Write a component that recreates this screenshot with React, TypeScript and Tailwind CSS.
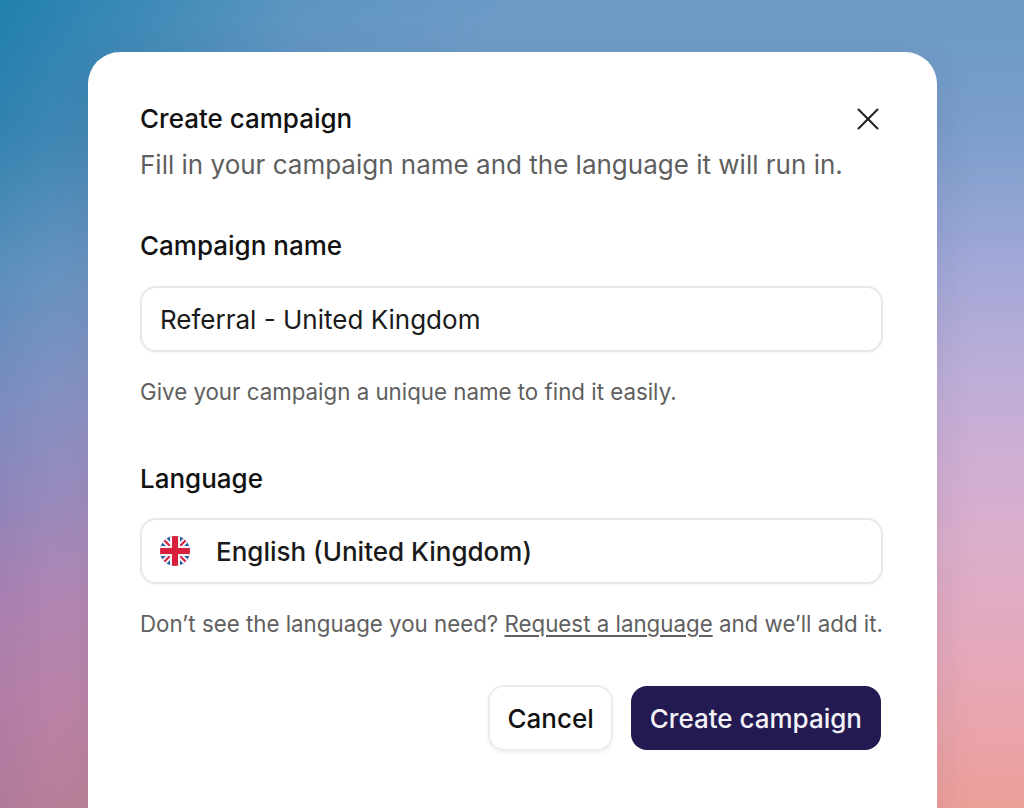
import { X } from 'lucide-react'

function UkFlag() {
  return (
    <svg width="30" height="30" viewBox="0 0 30 30" className="shrink-0">
      <defs>
        <clipPath id="flag-circle">
          <circle cx="15" cy="15" r="15" />
        </clipPath>
      </defs>
      <g clipPath="url(#flag-circle)">
        <rect width="30" height="30" fill="#2b5aa6" />
        <path d="M0 0 L30 30 M30 0 L0 30" stroke="#f5f5f5" strokeWidth="6" />
        <path d="M0 0 L30 30 M30 0 L0 30" stroke="#d8203c" strokeWidth="2" />
        <rect x="10" y="0" width="10" height="30" fill="#f5f5f5" />
        <rect x="0" y="10" width="30" height="10" fill="#f5f5f5" />
        <rect x="12" y="0" width="6" height="30" fill="#d8203c" />
        <rect x="0" y="12" width="30" height="6" fill="#d8203c" />
      </g>
    </svg>
  )
}

export default function App() {
  return (
    <div
      className="relative h-[808px] w-full overflow-hidden pt-[52px] pl-[88px] pr-[87px] font-['Inter',sans-serif] bg-[linear-gradient(180deg,#2080ae_0px,#3383b0_130px,#5b90bc_270px,#7b8cbf_400px,#8f85ba_500px,#a87fb0_600px,#b27da6_700px,#b07a9a_808px)] before:absolute before:inset-0 before:content-[''] before:bg-[linear-gradient(180deg,#6a9ac5_0px,#7c9ecb_130px,#8fa3d2_200px,#a3a8d7_270px,#bcaed8_370px,#cdaed4_450px,#dbaecb_540px,#e5a9bc_650px,#eba3a6_750px,#ed9f99_808px)] before:[mask-image:linear-gradient(90deg,transparent_0px,rgba(0,0,0,0.82)_300px,black_500px)]"
    >
      <div className="relative h-[800px] rounded-t-[32px] bg-white px-[52px] pt-[48px] shadow-[0_10px_40px_rgba(30,40,80,0.1)]">
        {/* Header */}
        <div className="flex items-center justify-between">
          <h2 className="text-[26px] leading-[36px] font-[460] text-[#111]">Create campaign</h2>
          <button className="mr-[-2px] text-[#222]" aria-label="Close">
            <X size={38} strokeWidth={1.3} />
          </button>
        </div>
        <p className="mt-[9px] text-[26px] leading-[36px] text-[#5f5f5f]">Fill in your campaign name and the language it will run in.</p>

        {/* Campaign name */}
        <label className="mt-[45px] block text-[26px] leading-[36px] font-[460] text-[#111]">Campaign name</label>
        <div className="mt-[22px] flex h-[66px] w-[743px] items-center rounded-[16px] border-2 border-[#e8e8e8] bg-white px-[18px] shadow-[0_1px_3px_rgba(0,0,0,0.05)]">
          <span className="text-[26px] text-[#1a1a1a]">Referral - United Kingdom</span>
        </div>
        <p className="mt-[24px] text-[22.3px] leading-[32px] text-[#5f5f5f]">Give your campaign a unique name to find it easily.</p>

        {/* Language */}
        <label className="mt-[53px] block text-[26px] leading-[36px] font-[460] text-[#111]">Language</label>
        <div className="mt-[21px] flex h-[66px] w-[743px] items-center gap-[26px] rounded-[16px] border-2 border-[#e8e8e8] bg-white px-[18px] shadow-[0_1px_3px_rgba(0,0,0,0.05)]">
          <UkFlag />
          <span className="text-[26px] font-medium text-[#1a1a1a]">English (United Kingdom)</span>
        </div>
        <p className="mt-[24px] text-[22.3px] leading-[32px] text-[#5f5f5f]">
          Don’t see the language you need? <span className="underline underline-offset-[3px]">Request a language</span> and we’ll add it.
        </p>

        {/* Actions */}
        <div className="mt-[45px] flex w-[743px] items-center justify-end gap-[18px] pr-[2px]">
          <button className="h-[66px] rounded-[16px] border-2 border-[#ececec] bg-white px-[17px] text-[26px] font-[460] text-[#111] shadow-[0_2px_4px_rgba(0,0,0,0.06)]">Cancel</button>
          <button className="h-[64px] rounded-[16px] bg-[#231a52] px-[19px] text-[26px] font-[460] text-[#f3f2f8]">Create campaign</button>
        </div>
      </div>
    </div>
  )
}
